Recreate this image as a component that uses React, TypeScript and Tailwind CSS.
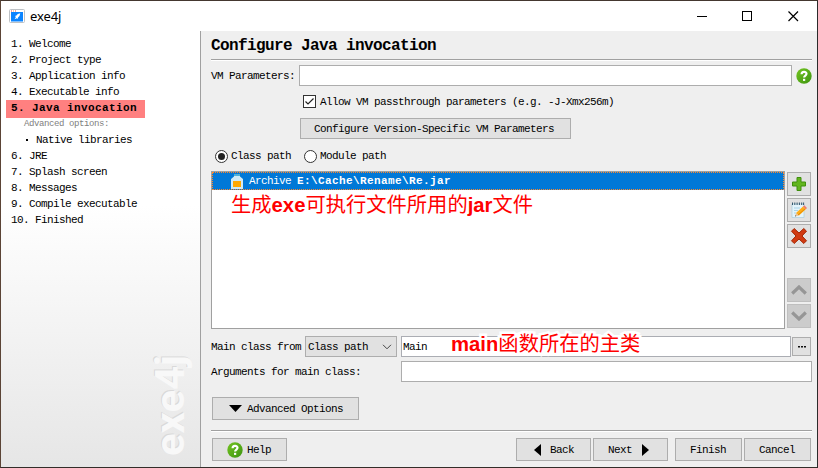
import type { ReactNode } from 'react';

function T({ children, className = '', variant = 'regular' }: { children: ReactNode; className?: string; variant?: 'regular' | 'bold' | 'small' }) {
  const styles = {
    regular: 'text-[11px] tracking-[-0.6px]',
    bold: 'text-[11px] font-bold tracking-[0.4px]',
    small: 'text-[9px] tracking-[-0.4px]',
  };
  return <span className={`block whitespace-pre leading-4 ${styles[variant]} ${className}`}>{children}</span>;
}

function HelpIcon() {
  return (
    <svg width="16" height="16" viewBox="0 0 16 16" className="shrink-0">
      <defs>
        <linearGradient id="hg" x1="0" y1="0" x2="1" y2="1">
          <stop offset="0" stopColor="#74c421" />
          <stop offset="1" stopColor="#3c9410" />
        </linearGradient>
      </defs>
      <circle cx="8" cy="8" r="7.7" fill="url(#hg)" />
      <path d="M5.6 6.2C5.6 3.2 10.5 3.3 10.5 5.8C10.5 7.6 8.1 7.5 8.1 9.6" fill="none" stroke="#fff" strokeWidth="2.2" />
      <rect x="7" y="10.8" width="2.2" height="2.1" fill="#fff" />
    </svg>
  );
}

function Button({ children, className = '' }: { children: ReactNode; className?: string }) {
  return (
    <button className={`flex shrink-0 items-center border border-[#adadad] bg-[#e1e1e1] ${className}`}>{children}</button>
  );
}

function ToolButton({ children, disabled = false }: { children: ReactNode; disabled?: boolean }) {
  return (
    <button
      className={`flex h-6 w-6 shrink-0 items-center justify-center border ${
        disabled ? 'border-[#bfbfbf] bg-[#cccccc]' : 'border-[#adadad] bg-[#e1e1e1]'
      }`}
    >
      {children}
    </button>
  );
}

function Separator() {
  return <div className="h-[2px] w-[601px] border-t border-[#a0a0a0] border-b border-b-white" />;
}

function TitleBar() {
  return (
    <header className="flex h-[30px] shrink-0 items-center bg-white">
      <svg width="16" height="14" viewBox="0 0 16 14" className="ml-2 shrink-0">
        <rect x="0.5" y="0.5" width="15" height="13" rx="1" fill="#fff" stroke="#bdc1c5" />
        <rect x="2" y="1.5" width="1" height="1" fill="#e04a3a" />
        <rect x="4" y="1.5" width="1" height="1" fill="#e99a5c" />
        <rect x="6" y="1.5" width="1" height="1" fill="#e04a3a" />
        <rect x="2" y="3" width="12" height="9.5" fill="#0a84ff" />
        <path d="M11.3 4.2L8.8 5.1L7.4 6.6L6 7L6.9 8L5.6 10.3L7.9 9.3L8.7 10L9 8.5L10.5 7Z" fill="#fff" />
      </svg>
      <span className="ml-[5px] flex-1 font-['Noto_Sans',sans-serif] text-[13px] leading-4 tracking-[-0.1px] text-black">exe4j</span>
      <svg width="110" height="12" viewBox="0 0 110 12" className="mr-[17px] shrink-0" fill="none" stroke="#000" strokeWidth="1">
        <path d="M7 6.5H17" />
        <rect x="52.5" y="1.5" width="9" height="9" />
        <path d="M98.5 1.5L108 11M108 1.5L98.5 11" strokeWidth="1.2" />
      </svg>
    </header>
  );
}

const before = ['1. Welcome', '2. Project type', '3. Application info', '4. Executable info'];
const after = ['6. JRE', '7. Splash screen', '8. Messages', '9. Compile executable', '10. Finished'];

function Sidebar() {
  return (
    <aside className="relative flex w-[200px] shrink-0 flex-col border-r border-[#a0a0a0] bg-linear-to-b from-white from-40% to-[#e6e6e6] pt-[5px]">
      {before.map((s) => (
        <T key={s} className="pl-[10px]">{s}</T>
      ))}
      <div className="ml-[5px] h-[18px] w-[139px] bg-[#ff8080] pl-[5px]">
        <T variant="bold">5. Java invocation</T>
      </div>
      <T variant="small" className="-mt-[2px] pl-[23px] text-[#808080]">Advanced options:</T>
      <div className="flex items-center pl-[25px]">
        <span className="h-[2px] w-[2px] bg-black" />
        <T className="ml-2">Native libraries</T>
      </div>
      {after.map((s) => (
        <T key={s} className="pl-[10px]">{s}</T>
      ))}
      <svg width="48" height="112" viewBox="0 0 48 112" className="absolute top-[317px] left-[150px] overflow-visible">
        <g className="font-[Roboto] text-[40px] font-bold">
          <text x="-107" y="32" fill="#d9d9d9" transform="rotate(-90)" textLength="101" lengthAdjust="spacingAndGlyphs">exe4j</text>
          <text x="-108" y="33" fill="#f8f8f8" transform="rotate(-90)" textLength="101" lengthAdjust="spacingAndGlyphs">exe4j</text>
        </g>
      </svg>
    </aside>
  );
}

function Radio({ label, checked = false }: { label: string; checked?: boolean }) {
  return (
    <label className="flex items-center">
      <span className="flex h-[13px] w-[13px] items-center justify-center rounded-full border border-[#333] bg-white">
        {checked && <span className="h-[7px] w-[7px] rounded-full bg-[#222]" />}
      </span>
      <T className="ml-[3px]">{label}</T>
    </label>
  );
}

function ArchiveList() {
  return (
    <div className="relative h-[158px] w-[574px] shrink-0 border border-[#a0a0a0] bg-white">
      <div className="flex h-[18px] items-center border border-dotted border-[#ff8728] bg-[#0078d7] bg-clip-border pl-[18px] text-white">
        <svg width="12" height="15" viewBox="0 0 12 15" className="shrink-0">
          <path d="M3 0H9V2.5L12 5V15H0V5L3 2.5Z" fill="#cfeaf5" />
          <path d="M3 0H9V2H3Z" fill="#4db0d8" />
          <path d="M2 7H10V13H2Z" fill="#ffa800" />
        </svg>
        <T className="ml-[6px]">Archive </T>
        <T variant="bold">{'E:\\Cache\\Rename\\Re.jar'}</T>
      </div>
      <div className="absolute top-[20px] left-[19px] whitespace-nowrap font-['Liberation_Sans','Noto_Sans_CJK_SC',sans-serif] text-[20.3px] leading-[26px] text-[#ff0000]">
        生成<b>exe</b>可执行文件所用的<b>jar</b>文件
      </div>
    </div>
  );
}

function MainPanel() {
  return (
    <main className="flex w-[616px] shrink-0 flex-col bg-[#efefef] pl-[10px]">
      <h1 className="h-7 whitespace-pre pt-[5px] text-[16px] leading-5 font-bold tracking-[-0.6px]">Configure Java invocation</h1>
      <Separator />
      <div className="mt-1 flex h-[21px] items-center">
        <T className="w-[88px]">VM Parameters:</T>
        <div className="h-[21px] w-[493px] border border-[#adadad] bg-white" />
        <span className="ml-1"><HelpIcon /></span>
      </div>
      <div className="mt-[9px] ml-[92px] flex h-[13px] items-center">
        <svg width="13" height="13" viewBox="0 0 13 13">
          <rect x="0.5" y="0.5" width="12" height="12" fill="#fff" stroke="#333" />
          <path d="M2.5 6.5L5 9L10.5 3.5" fill="none" stroke="#222" strokeWidth="1.2" />
        </svg>
        <T className="ml-1">Allow VM passthrough parameters (e.g. -J-Xmx256m)</T>
      </div>
      <Button className="mt-[10px] ml-[89px] h-[21px] w-[271px] pl-[13px]">
        <T>Configure Version-Specific VM Parameters</T>
      </Button>
      <div className="mt-[9px] ml-1 flex h-4 items-center gap-[13px]">
        <Radio label="Class path" checked />
        <Radio label="Module path" />
      </div>
      <div className="mt-[7px] flex gap-[2px]">
        <ArchiveList />
        <div className="flex flex-col gap-[2px] pt-px">
          <ToolButton>
            <svg width="16" height="16" viewBox="0 0 16 16">
              <path d="M6 1.5H10V6H14.5V10H10V14.5H6V10H1.5V6H6Z" fill="#62b51e" stroke="#3f8e0c" />
            </svg>
          </ToolButton>
          <ToolButton>
            <svg width="18" height="18" viewBox="0 0 18 18" className="shrink-0">
              <path d="M2 3H14V16.5H2Z" fill="#e4f4fb" stroke="#aacddd" strokeWidth="0.7" />
              <path d="M2.5 1.5V4M4.8 1.5V4M7.1 1.5V4M9.4 1.5V4M11.7 1.5V4M13.6 1.5V4" stroke="#33566c" />
              <path d="M4 7H10M4 9.5H8M4 12H6" stroke="#a8d4e8" />
              <path d="M5 15.5L6 12L9 14.5Z" fill="#e8c49a" />
              <path d="M6 12L13 5.5L15.8 8.2L9 14.5Z" fill="#ffad18" />
              <path d="M8 14L15.5 7.5" stroke="#e88a00" />
              <path d="M13 5.5L14.3 4.3L17 7L15.8 8.2Z" fill="#f07a68" />
              <path d="M5 15.5L5.4 14.3L6.2 15Z" fill="#333" />
            </svg>
          </ToolButton>
          <ToolButton>
            <svg width="18" height="18" viewBox="0 0 18 18" className="shrink-0">
              <path d="M4.2 1.5L9 6L13.8 1.5L16.5 4.2L12 9L16.5 13.8L13.8 16.5L9 12L4.2 16.5L1.5 13.8L6 9L1.5 4.2Z" fill="#d13a12" stroke="#a42805" />
            </svg>
          </ToolButton>
          <div className="h-[26px]" />
          <ToolButton disabled>
            <svg width="16" height="10" viewBox="0 0 16 10"><path d="M1.2 8.5L8 2L14.8 8.5" fill="none" stroke="#969696" strokeWidth="3.2" /></svg>
          </ToolButton>
          <ToolButton disabled>
            <svg width="16" height="10" viewBox="0 0 16 10"><path d="M1.2 1.5L8 8L14.8 1.5" fill="none" stroke="#969696" strokeWidth="3.2" /></svg>
          </ToolButton>
        </div>
      </div>
      <div className="relative mt-[7px] flex h-[21px] items-center">
        <T className="w-[94px]">Main class from</T>
        <div className="flex h-[21px] w-[92px] items-center border border-[#adadad] bg-[#e1e1e1] pl-[2px]">
          <T className="flex-1">Class path</T>
          <svg width="10" height="6" viewBox="0 0 10 6" className="mr-1"><path d="M1 0.8L5 4.8L9 0.8" fill="none" stroke="#444" /></svg>
        </div>
        <div className="ml-1 flex h-[21px] w-[390px] items-center border border-[#abadb3] bg-white pl-[1px]"><T>Main</T></div>
        <Button className="ml-px h-[19px] w-[19px] justify-center">
          <svg width="8" height="2" viewBox="0 0 8 2" fill="#111"><path d="M0 0H2V1.5H0ZM3 0H5V1.5H3ZM6 0H8V1.5H6Z" /></svg>
        </Button>
        <div className="absolute -top-[5px] left-[240px] whitespace-nowrap font-['Liberation_Sans','Noto_Sans_CJK_SC',sans-serif] text-[20.3px] leading-[26px] text-[#ff0000] [paint-order:stroke_fill] [-webkit-text-stroke:5px_white]">
          <b>main</b>函数所在的主类
        </div>
      </div>
      <div className="mt-1 flex h-[21px] items-center">
        <T className="w-[190px]">Arguments for main class:</T>
        <div className="h-[21px] w-[411px] border border-[#adadad] bg-white" />
      </div>
      <Button className="mt-[15px] ml-px h-[23px] w-[147px] pl-4">
        <svg width="13" height="7" viewBox="0 0 13 7" className="mr-[5px]"><path d="M0 0H13L6.5 7Z" /></svg>
        <T>Advanced Options</T>
      </Button>
      <div className="mt-[10px]"><Separator /></div>
      <div className="mt-[6px] flex h-[23px] pl-px">
        <Button className="w-[75px] pl-[14px]"><HelpIcon /><T className="ml-1">Help</T></Button>
        <Button className="ml-[229px] w-[75px] pl-[17px]">
          <svg width="7" height="12" viewBox="0 0 7 12" className="mr-[9px]"><path d="M7 0V12L0 6Z" /></svg>
          <T>Back</T>
        </Button>
        <Button className="ml-[2px] w-[75px] pl-[14px]">
          <T>Next</T>
          <svg width="7" height="12" viewBox="0 0 7 12" className="ml-[10px]"><path d="M0 0V12L7 6Z" /></svg>
        </Button>
        <Button className="ml-[7px] w-[67px] pl-[14px]"><T>Finish</T></Button>
        <Button className="ml-[2px] w-[67px] pl-[14px]"><T>Cancel</T></Button>
      </div>
    </main>
  );
}

export default function App() {
  return (
    <div className="flex h-[468px] w-[818px] flex-col overflow-hidden border border-t-[#44372f] border-r-[#2b2b2b] border-b-[#332d29] border-l-[#5b4436] bg-[#efefef] font-['Liberation_Mono',monospace] text-black">
      <TitleBar />
      <div className="flex min-h-0 flex-1">
        <Sidebar />
        <MainPanel />
      </div>
    </div>
  );
}
